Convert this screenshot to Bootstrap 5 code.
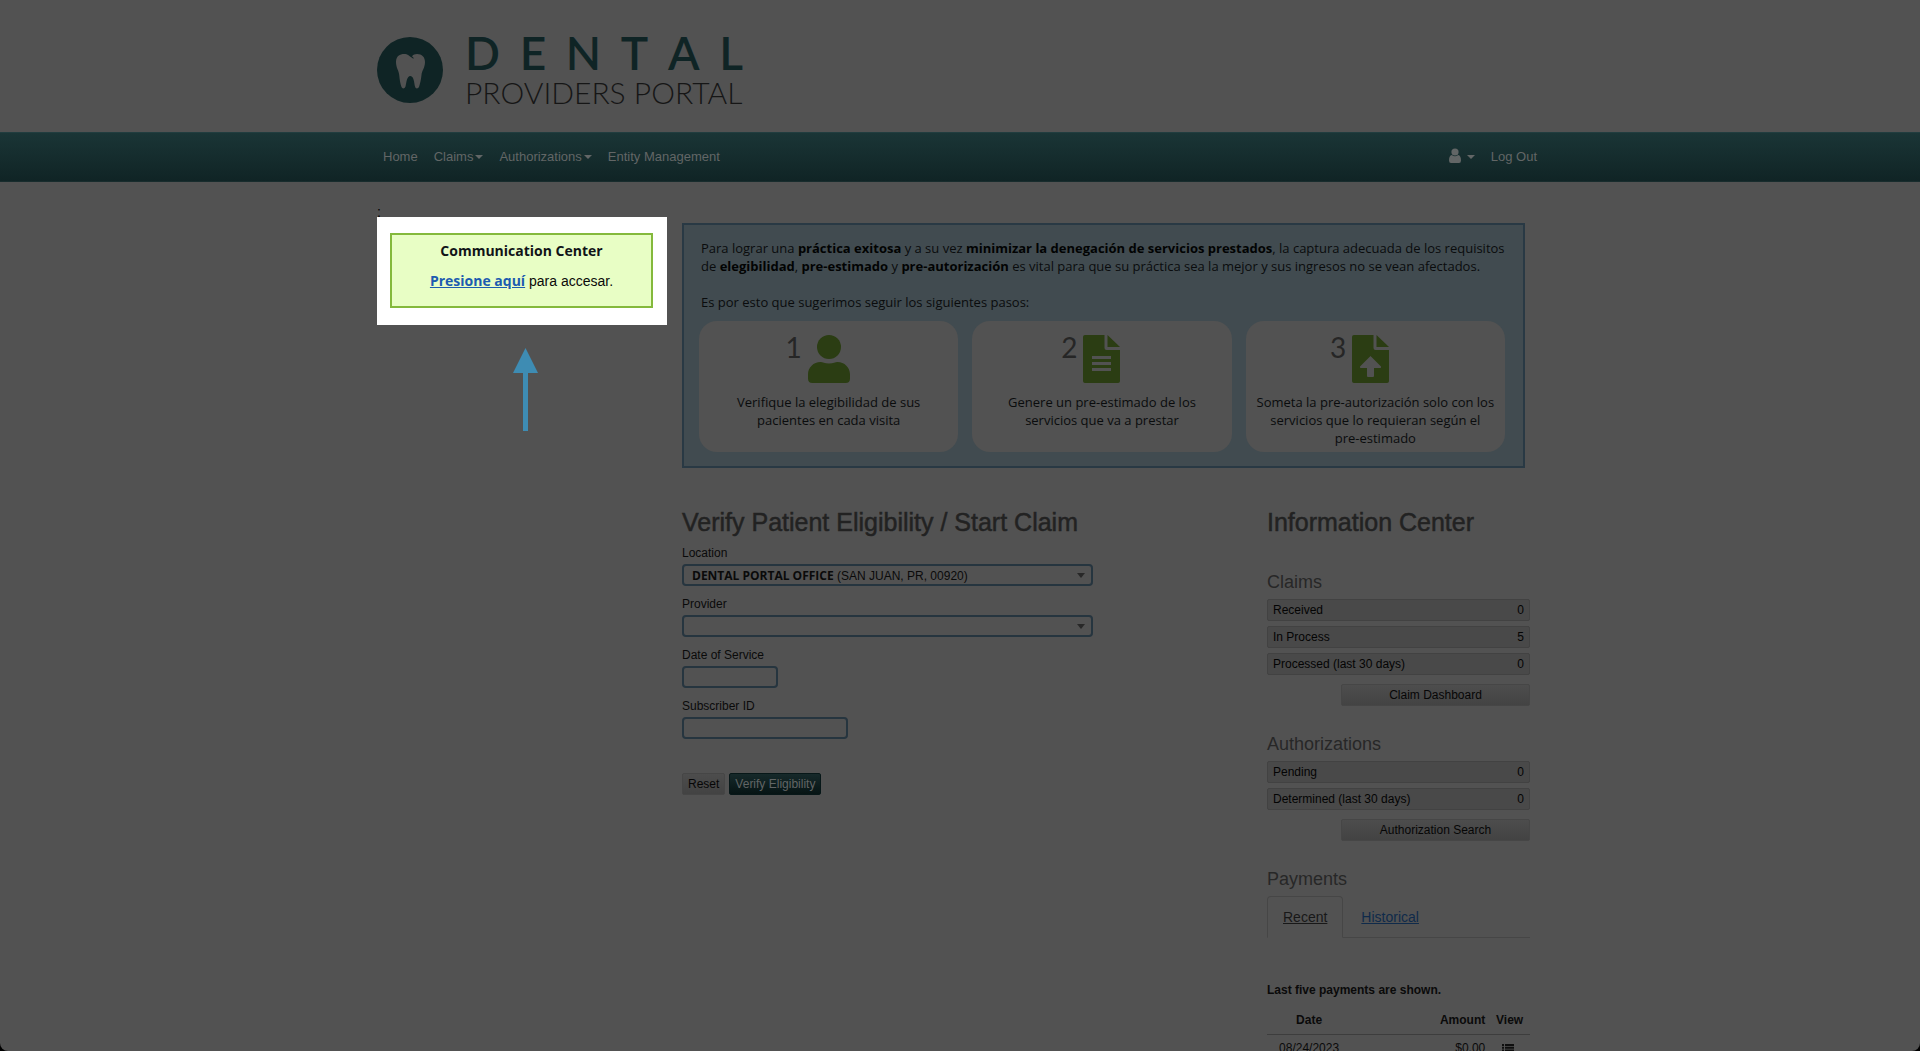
<!DOCTYPE html>
<html lang="es">
<head>
<meta charset="utf-8">
<meta name="viewport" content="width=device-width, initial-scale=1">
<title>Dental Providers Portal</title>
<link href="https://cdn.jsdelivr.net/npm/bootstrap@5.3.0/dist/css/bootstrap.min.css" rel="stylesheet">
<style>
:root { --page: #525252; --ink: #0a0a0a; --line: #26353f; --teal: #0f2425; }
html { background: #000; }
body { background: #000; color: var(--ink); font: 12px/18px "Liberation Sans", Arial, sans-serif; }
.portal { height: 100vh; background: var(--page); border-radius: 0 0 8px 8px; }
.wrap { max-width: 1170px; margin: 0 auto; }

.masthead { height: 132px; padding: 34px 0 0 2px; gap: 22px; }
.brand-mark { width: 66px; height: 66px; margin-top: 3px; }
.wordmark { width: 278px; font-family: Lato, sans-serif; }
.word-top { font-size: 46px; line-height: 46px; font-weight: 600; color: var(--teal); height: 38px; align-items: center; }
.word-sub { font-size: 30px; line-height: 36px; font-weight: 300; color: #161616; white-space: nowrap; margin-top: 2px; }

.mainbar { background: linear-gradient(#1a3536, #102425); border-top: 1px solid #213d3f; border-bottom: 1px solid #182c2d; height: 50px; }
.mainbar .nav-link { color: #626666; font-size: 13px; line-height: 18px; padding: 15px 8px; }
.mainbar .dropdown-toggle::after { margin-left: 2px; vertical-align: 2px; border-top-width: 4px; border-left-width: 4px; border-right-width: 4px; }
.mainbar .user-menu { padding-top: 13px; padding-bottom: 13px; }
.mainbar .user-menu::after { margin-left: 6px; vertical-align: 0; }

.content { display: grid; grid-template-columns: 290px 1fr; gap: 15px; padding: 20px 15px 0 2px; }
.colon { font-size: 14px; line-height: 20px; height: 15px; color: #000; }
.spotlight { position: relative; background: #fff; padding: 16px 14px 17px 13px; }
.notice { background: #e8fec5; border: 2px solid #84b93c; height: 75px; font-size: 14px; line-height: 20px; padding-top: 6px; }
.notice h2 { font: 700 14px/20px "Open Sans", sans-serif; margin: 0 0 10px; color: #101418; }
.notice a { font-family: "Open Sans", sans-serif; font-weight: 700; color: #1c5bb0; }
.pointer-arrow { display: block; margin: 23px 0 0 136px; }

.steps-panel { margin: 21px 5px 0 0; border: 2px solid #293944; background: #414b50; font: 13px/18px "Open Sans", sans-serif; color: #0a0c0d; padding: 14px 18px 14px 15px; height: 245px; }
.steps-panel p { margin: 0 0 18px 2px; }
.steps-panel b { color: #020303; font-weight: 700; }
.step-grid { display: grid; grid-template-columns: repeat(3, 1fr); gap: 14px; margin-top: -8px; }
.step-box { background: var(--page); border-radius: 18px; height: 131px; padding: 14px 8px 0; text-align: center; }
.step-num { width: 28px; font: 28px/24px Lato, sans-serif; color: #262626; text-align: right; padding-right: 6px; }
.step-icon { height: 48px; fill: #2b3d13; }
.step-box .step-text { padding-top: 10px; }

.lower { display: grid; grid-template-columns: 1fr 263px; gap: 30px; margin-top: 38px; }
.title-lg { font-size: 25px; line-height: 32px; color: #222; -webkit-text-stroke: 0.5px #222; margin: 0 0 6px; font-weight: 400; }
.info-title { margin-bottom: 32px; }
.field { margin-bottom: 9px; }
.field label { display: block; margin-bottom: 2px; line-height: 18px; }
.field .form-control, .field .form-select { height: 22px; min-height: 22px; border: 2px solid var(--line); border-radius: 4px; background-color: transparent; color: var(--ink); font-size: 12px; padding: 0 8px; }
.field .form-select { background-image: none; width: 411px; max-width: 100%; }
.select-shell { position: relative; width: 411px; max-width: 100%; }
.select-shell::after { content: ""; position: absolute; right: 8px; top: 9px; border: 4px solid transparent; border-top: 5px solid #282828; border-bottom: 0; pointer-events: none; }
.select-value { position: absolute; left: 10px; top: 3px; pointer-events: none; }
.select-value b { font-family: "Open Sans", sans-serif; }
.w-date.form-control { width: 96px; }
.w-sub.form-control { width: 166px; }
.form-actions { padding-top: 25px; }
.btn-flat { height: 22px; font-size: 12px; line-height: 18px; padding: 1px 5px; border-radius: 2px; border: 1px solid #464646; background: linear-gradient(#4d4d4d, #434343); color: #060606; }
.btn-teal { background: linear-gradient(#16292a, #061414); border-color: #071718; color: #616565; }
.wide-btn { width: 189px; }

.title-sm { font-size: 18px; line-height: 24px; font-weight: 400; color: #272727; margin: 0 0 5px; }
.title-next { margin-top: 26px; }
.stat { height: 22px; border: 1px solid #424242; border-radius: 2px; background: #494949; padding: 1px 5px; margin-bottom: 5px; color: #040404; }
.pay-tabs { --bs-nav-tabs-border-color: #464646; }
.pay-tabs .nav-link { font-size: 14px; line-height: 20px; padding: 10px 15px; text-decoration: underline; color: #0f2a4a; border-radius: 4px 4px 0 0; }
.pay-tabs .nav-link.active { background: var(--page); color: #181818; border-color: #464646 #464646 var(--page); margin-right: 2px; }
.pay-note { font-weight: 700; margin: 43px 0 9px; }
.pay-table { width: 100%; color: var(--ink); }
.pay-table th { font-weight: 700; padding: 3px 0 5px; border-bottom: 1px solid #3d3d3d; }
.pay-table td { padding: 4px 0; }
@media (max-width: 1199px) {
  .content, .lower { grid-template-columns: 1fr; }
  .portal { height: auto; min-height: 100vh; }
  .steps-panel, .step-box { height: auto; }
}
</style>
</head>
<body>
<div class="portal overflow-hidden">
  <header class="wrap masthead d-flex">
    <svg class="brand-mark" viewBox="0 0 66 66" aria-hidden="true">
      <circle cx="33" cy="33" r="33" fill="#0f2425"/>
      <path fill="#525252" d="M19 25c0-6 4-8 8-8 4 0 5 2 9 4.500l1-.3-2-2c1-1.500 3-2.200 5-2.200 5 0 8 3 8 8 0 6-3 8-3.500 13-.5 5-1.500 9-2.500 12-1 2-3.500 2-4-.5-1-4-1-10-4.500-10.500-4 0-4 7-5 10.500-.8 2.500-3.200 2.500-4 .5-1.200-3-1.800-7-2.300-12C21.700 33 19 31 19 25z"/>
    </svg>
    <div class="wordmark">
      <div class="word-top d-flex justify-content-between"><span>D</span><span>E</span><span>N</span><span>T</span><span>A</span><span>L</span></div>
      <div class="word-sub">PROVIDERS PORTAL</div>
    </div>
  </header>

  <nav class="mainbar">
    <div class="wrap d-flex justify-content-between">
      <div class="nav">
        <a class="nav-link" href="#">Home</a>
        <a class="nav-link dropdown-toggle" href="#">Claims</a>
        <a class="nav-link dropdown-toggle" href="#">Authorizations</a>
        <a class="nav-link" href="#">Entity Management</a>
      </div>
      <div class="nav">
        <a class="nav-link dropdown-toggle user-menu" href="#" aria-label="Account"><svg width="12" height="16" viewBox="0 0 12 16" fill="#626666" aria-hidden="true"><circle cx="6" cy="4" r="3.600"/><path d="M2.800 7Q6 9.600 9.200 7 12 7.500 12 12.500 12 15 10 15H2Q0 15 0 12.500 0 7.500 2.800 7z"/></svg></a>
        <a class="nav-link" href="#">Log Out</a>
      </div>
    </div>
  </nav>

  <main class="wrap content">
    <aside>
      <div class="colon">:</div>
      <div class="spotlight">
        <div class="notice text-center">
          <h2>Communication Center</h2>
          <div><a href="#">Presione aquí</a> para accesar.</div>
        </div>
      </div>
      <svg class="pointer-arrow" width="25" height="83" viewBox="0 0 25 83" fill="#3e8cb3" aria-hidden="true"><path d="M12.500 0 25 25H15V83H10V25H0z"/></svg>
    </aside>

    <div>
      <section class="steps-panel">
        <p>Para lograr una <b>práctica exitosa</b> y a su vez <b>minimizar la denegación de servicios prestados</b>, la captura adecuada de los requisitos de <b>elegibilidad</b>, <b>pre-estimado</b> y <b>pre-autorización</b> es vital para que su práctica sea la mejor y sus ingresos no se vean afectados.</p>
        <p>Es por esto que sugerimos seguir los siguientes pasos:</p>
        <div class="step-grid">
          <div class="step-box">
            <div class="d-flex justify-content-center"><span class="step-num">1</span><svg class="step-icon" width="42" viewBox="0 0 42 48" aria-hidden="true"><circle cx="21" cy="12" r="12"/><path d="M12.600 27c2 0 4 1.500 8.400 1.500S27.400 27 29.400 27C36.500 27 42 32.500 42 39.500V43.500Q42 48 37.500 48H4.500Q0 48 0 43.500V39.500C0 32.500 5.500 27 12.600 27z"/></svg><span class="step-num"></span></div>
            <div class="step-text">Verifique la elegibilidad de sus<br>pacientes en cada visita</div>
          </div>
          <div class="step-box">
            <div class="d-flex justify-content-center"><span class="step-num">2</span><svg class="step-icon" width="37" viewBox="0 0 37 48" aria-hidden="true"><path fill-rule="evenodd" d="M2 0H21.500V13Q21.500 15 23.500 15H37V46Q37 48 35 48H2Q0 48 0 46V2Q0 0 2 0zM9 21V24H28V21zM9 27V30H28V27zM9 33V36H28V33z"/><path d="M24.500 0 37 12H24.500z"/></svg><span class="step-num"></span></div>
            <div class="step-text">Genere un pre-estimado de los<br>servicios que va a prestar</div>
          </div>
          <div class="step-box">
            <div class="d-flex justify-content-center"><span class="step-num">3</span><svg class="step-icon" width="46" viewBox="0 0 46 48" aria-hidden="true"><path fill-rule="evenodd" d="M2 0H21.500V13Q21.500 15 23.500 15H37V46Q37 48 35 48H2Q0 48 0 46V2Q0 0 2 0zM18.500 21 8 31.500Q7.500 33 9 33H15V41Q15 42 16 42H21Q22 42 22 41V33H28Q29.500 33 29 31.500z"/><path d="M24.500 0 37 12H24.500z"/></svg><span class="step-num"></span></div>
            <div class="step-text">Someta la pre-autorización solo con los<br>servicios que lo requieran según el<br>pre-estimado</div>
          </div>
        </div>
      </section>

      <div class="lower">
        <form>
          <h1 class="title-lg">Verify Patient Eligibility / Start Claim</h1>
          <div class="field">
            <label for="loc">Location</label>
            <div class="select-shell">
              <select id="loc" class="form-select"><option selected></option></select>
              <span class="select-value"><b>DENTAL PORTAL OFFICE</b> (SAN JUAN, PR, 00920)</span>
            </div>
          </div>
          <div class="field">
            <label for="prov">Provider</label>
            <div class="select-shell"><select id="prov" class="form-select"><option></option></select></div>
          </div>
          <div class="field">
            <label for="dos">Date of Service</label>
            <input id="dos" type="text" class="form-control w-date">
          </div>
          <div class="field">
            <label for="sub">Subscriber ID</label>
            <input id="sub" type="text" class="form-control w-sub">
          </div>
          <div class="d-flex gap-1 form-actions">
            <button type="reset" class="btn btn-flat">Reset</button>
            <button type="button" class="btn btn-flat btn-teal">Verify Eligibility</button>
          </div>
        </form>

        <section>
          <h2 class="title-lg info-title">Information Center</h2>
          <h3 class="title-sm">Claims</h3>
          <div class="stat d-flex justify-content-between"><span>Received</span><span>0</span></div>
          <div class="stat d-flex justify-content-between"><span>In Process</span><span>5</span></div>
          <div class="stat d-flex justify-content-between"><span>Processed (last 30 days)</span><span>0</span></div>
          <div class="d-flex justify-content-end pt-1"><button type="button" class="btn btn-flat wide-btn">Claim Dashboard</button></div>
          <h3 class="title-sm title-next">Authorizations</h3>
          <div class="stat d-flex justify-content-between"><span>Pending</span><span>0</span></div>
          <div class="stat d-flex justify-content-between"><span>Determined (last 30 days)</span><span>0</span></div>
          <div class="d-flex justify-content-end pt-1"><button type="button" class="btn btn-flat wide-btn">Authorization Search</button></div>
          <h3 class="title-sm title-next">Payments</h3>
          <div class="nav nav-tabs pay-tabs">
            <a class="nav-link active" href="#">Recent</a>
            <a class="nav-link" href="#">Historical</a>
          </div>
          <p class="pay-note">Last five payments are shown.</p>
          <table class="pay-table">
            <colgroup><col style="width:32%"><col style="width:51%"><col style="width:17%"></colgroup>
            <thead><tr><th class="text-center">Date</th><th class="text-end">Amount</th><th class="text-center ps-1">View</th></tr></thead>
            <tbody><tr><td class="text-center">08/24/2023</td><td class="text-end">$0.00</td><td class="text-center"><a href="#" aria-label="View"><svg width="12" height="10" viewBox="0 0 12 10" fill="#0e0e0e" aria-hidden="true"><path d="M0 0h2v2H0zM3 0h9v2H3zM0 2.700h2v2H0zM3 2.700h9v2H3zM0 5.400h2v2H0zM3 5.400h9v2H3zM0 8h2v2H0zM3 8h9v2H3z"/></svg></a></td></tr></tbody>
          </table>
        </section>
      </div>
    </div>
  </main>
</div>
<script src="https://cdn.jsdelivr.net/npm/bootstrap@5.3.0/dist/js/bootstrap.bundle.min.js"></script>
</body>
</html>
